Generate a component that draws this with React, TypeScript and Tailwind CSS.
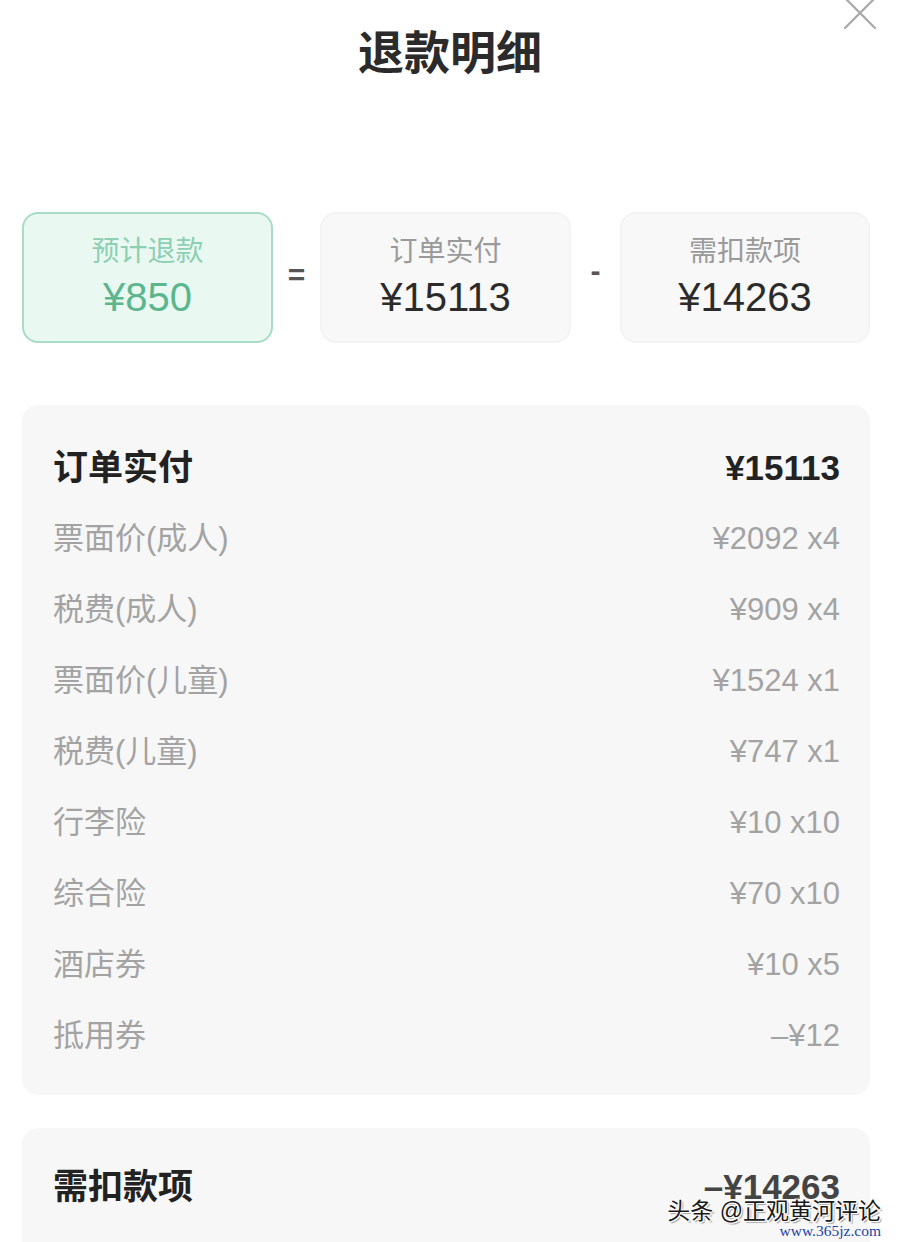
import React from "react";

const font = { fontFamily: '"Liberation Sans", "Noto Sans CJK SC", sans-serif' };

const rows: [string, string][] = [
  ["票面价(成人)", "¥2092 x4"],
  ["税费(成人)", "¥909 x4"],
  ["票面价(儿童)", "¥1524 x1"],
  ["税费(儿童)", "¥747 x1"],
  ["行李险", "¥10 x10"],
  ["综合险", "¥70 x10"],
  ["酒店券", "¥10 x5"],
  ["抵用券", "–¥12"],
];

export default function App() {
  return (
    <div
      className="relative w-[900px] h-[1242px] overflow-hidden bg-white"
      style={font}
    >
      {/* close */}
      <svg
        className="absolute left-[842px] top-[-4px]"
        width="36"
        height="34"
        viewBox="0 0 36 34"
      >
        <path d="M3 2 L33 32 M33 2 L3 32" stroke="#a8a8a8" strokeWidth="2.2" strokeLinecap="round" />
      </svg>

      <div className="flex flex-col">
        <h1 className="pt-[22px] text-center text-[46px] leading-[62px] font-bold text-[#2b2b2b]">
          退款明细
        </h1>

        {/* formula cards */}
        <div className="mt-[128px] flex items-center pl-[22px] pr-[30px]">
          <div className="flex h-[131px] w-[251px] flex-col items-center justify-center rounded-[16px] border-2 border-[#a9dcc6] bg-[#e9f9f2]">
            <div className="text-[28px] leading-[36px] text-[#8ccfb2]">预计退款</div>
            <div className="mt-[3px] text-[40px] leading-[48px] font-medium text-[#5bb68e]">¥850</div>
          </div>
          <div className="flex w-[47px] justify-center pb-[6px] text-[30px] font-bold text-[#555]">=</div>
          <div className="flex h-[131px] w-[251px] flex-col items-center justify-center rounded-[16px] border-2 border-[#f3f3f3] bg-[#f8f8f8]">
            <div className="text-[28px] leading-[36px] text-[#9a9a9a]">订单实付</div>
            <div className="mt-[3px] text-[40px] leading-[48px] font-medium text-[#2b2b2b]">¥15113</div>
          </div>
          <div className="flex w-[49px] justify-center pb-[14px] text-[30px] font-bold text-[#555]">-</div>
          <div className="flex h-[131px] w-[250px] flex-col items-center justify-center rounded-[16px] border-2 border-[#f3f3f3] bg-[#f8f8f8]">
            <div className="text-[28px] leading-[36px] text-[#9a9a9a]">需扣款项</div>
            <div className="mt-[3px] text-[40px] leading-[48px] font-medium text-[#2b2b2b]">¥14263</div>
          </div>
        </div>

        {/* detail panel */}
        <div className="ml-[22px] mr-[30px] mt-[62px] flex h-[690px] flex-col rounded-[16px] bg-[#f7f7f7] pl-[31px] pr-[30px] pt-[28px]">
          <div className="flex h-[71px] items-center justify-between text-[35px] font-bold text-[#222]">
            <span>订单实付</span>
            <span>¥15113</span>
          </div>
          {rows.map(([l, r]) => (
            <div
              key={l}
              className="flex h-[71px] items-center justify-between text-[31px] text-[#a3a3a3]"
            >
              <span>{l}</span>
              <span>{r}</span>
            </div>
          ))}
        </div>

        {/* deduction panel */}
        <div className="ml-[22px] mr-[30px] mt-[33px] flex h-[200px] flex-col rounded-[16px] bg-[#f7f7f7] pl-[31px] pr-[30px] pt-[24px]">
          <div className="flex h-[71px] items-center justify-between text-[35px] font-bold text-[#222]">
            <span>需扣款项</span>
            <span className="text-[#444]">–¥14263</span>
          </div>
        </div>
      </div>

      {/* watermark */}
      <div className="absolute right-[19px] top-[1195px] flex flex-col items-end">
        <div
          className="text-[23px] leading-[32px] text-[#1a1a1a]"
          style={{
            textShadow:
              "1px 1px 0 #fff, -1px -1px 0 #fff, 1px -1px 0 #fff, -1px 1px 0 #fff, 2px 2px 1px rgba(0,0,0,0.35)",
          }}
        >
          头条 @正观黄河评论
        </div>
        <div
          className="-mt-[5px] text-[15.5px] leading-[18px] text-[#1b3fa6]"
          style={{ fontFamily: '"Liberation Serif", serif' }}
        >
          www.365jz.com
        </div>
      </div>
    </div>
  );
}
